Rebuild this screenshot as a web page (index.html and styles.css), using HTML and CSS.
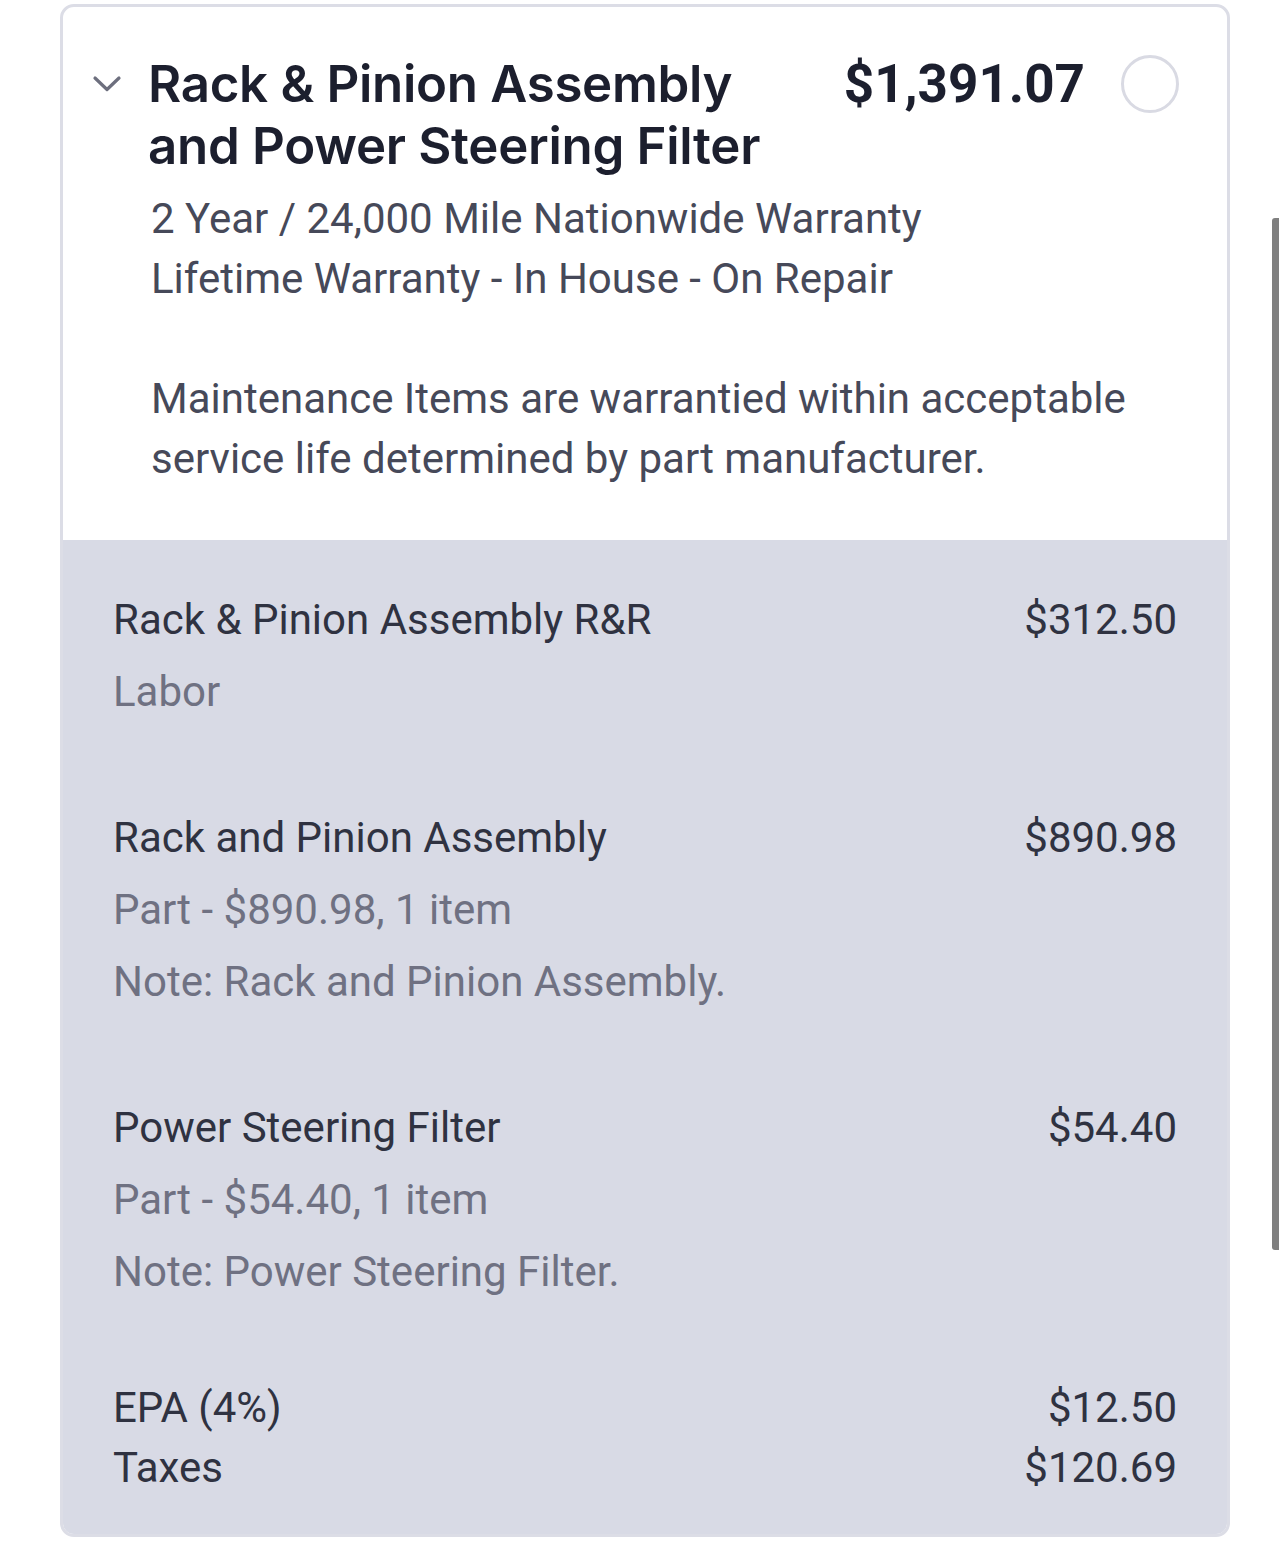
FILE: index.html
```html
<!DOCTYPE html>
<html>
<head>
<meta charset="utf-8">
<link rel="stylesheet" href="styles.css">
</head>
<body>
<div class="card">
  <div class="top">
    <div class="head">
      <svg class="chev" width="30" height="20" viewBox="0 0 30 20"><path d="M3 4 L15 15.5 L27 4" fill="none" stroke="#6d6f7e" stroke-width="3.2" stroke-linecap="round" stroke-linejoin="round"/></svg>
      <h1 class="title">Rack &amp; Pinion Assembly and Power Steering Filter</h1>
      <div class="price">$1,391.07</div>
      <div class="radio"></div>
    </div>
    <div class="desc">
      <p class="line">2 Year / 24,000 Mile Nationwide Warranty</p>
      <p class="line">Lifetime Warranty - In House - On Repair</p>
      <p class="line para">Maintenance Items are warrantied within acceptable service life determined by part manufacturer.</p>
    </div>
  </div>
  <div class="items">
    <div class="item">
      <div class="row"><span class="name">Rack &amp; Pinion Assembly R&amp;R</span><span class="amt">$312.50</span></div>
      <div class="sub">Labor</div>
    </div>
    <div class="item">
      <div class="row"><span class="name">Rack and Pinion Assembly</span><span class="amt">$890.98</span></div>
      <div class="sub">Part - $890.98, 1 item</div>
      <div class="sub">Note: Rack and Pinion Assembly.</div>
    </div>
    <div class="item">
      <div class="row"><span class="name">Power Steering Filter</span><span class="amt">$54.40</span></div>
      <div class="sub">Part - $54.40, 1 item</div>
      <div class="sub">Note: Power Steering Filter.</div>
    </div>
    <div class="totals">
      <div class="trow"><span>EPA (4%)</span><span>$12.50</span></div>
      <div class="trow"><span>Taxes</span><span>$120.69</span></div>
    </div>
  </div>
</div>
<div class="scrollbar"></div>
</body>
</html>
```
FILE: styles.css
```css
html, body {
  margin: 0;
  padding: 0;
  background: #ffffff;
}
body {
  font-family: Roboto, "Liberation Sans", sans-serif;
  position: relative;
  min-height: 1552px;
}
.card {
  margin: 4px 0 0 60px;
  width: 1170px;
  box-sizing: border-box;
  border: 3px solid #dcdde6;
  border-radius: 14px;
  overflow: hidden;
  background: #ffffff;
}
.top {
  padding: 0 0 51px 0;
}
.head {
  display: flex;
  align-items: flex-start;
  padding: 46px 48px 0 29px;
}
.chev {
  margin-top: 21px;
  flex: none;
}
.title {
  margin: 0 0 0 26px;
  flex: 1;
  font-family: Inter, "Noto Sans", sans-serif;
  font-weight: 600;
  font-size: 51px;
  line-height: 62px;
  color: #1c1f2e;
  letter-spacing: -0.3px;
  max-width: 640px;
}
.price {
  font-family: Roboto, sans-serif;
  font-weight: 700;
  font-size: 53px;
  line-height: 62px;
  color: #1c1f2e;
  margin-left: auto;
}
.radio {
  width: 52px;
  height: 52px;
  border: 3px solid #d9dae3;
  border-radius: 50%;
  margin: 2px 0 0 36px;
  flex: none;
}
.desc {
  padding: 12px 40px 0 88px;
  color: #464959;
  font-size: 42px;
  line-height: 60px;
}
.line {
  margin: 0;
}
.para {
  margin-top: 60px;
}
.items {
  background: #d8dae5;
  padding: 44px 50px 36px 50px;
}
.item {
  margin-bottom: 74px;
}
.row, .trow {
  display: flex;
  justify-content: space-between;
  font-size: 42px;
  line-height: 72px;
  color: #2f3241;
}
.sub {
  font-size: 42px;
  line-height: 72px;
  color: #6f7182;
}
.totals {
  margin-top: -4px;
}
.trow {
  line-height: 60px;
}
.scrollbar {
  position: absolute;
  left: 1272px;
  top: 218px;
  width: 8px;
  height: 1032px;
  background: #7f7f7f;
  border-radius: 3px 0 0 3px;
}
```
